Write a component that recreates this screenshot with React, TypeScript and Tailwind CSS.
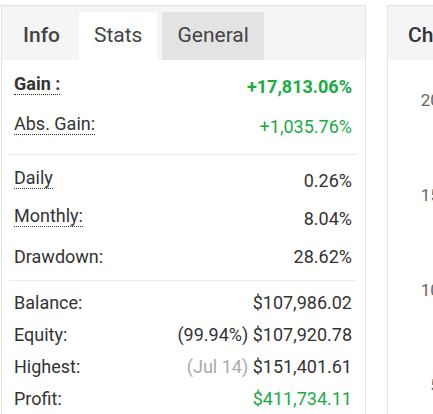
import React from "react";

const green = "text-[#19ac45]";

function Dotted({ children, bold }: { children: React.ReactNode; bold?: boolean }) {
  // underlined labels sit a little higher than their values
  return (
    <span
      className={`mb-[4px] inline-block border-b border-dotted border-[#333] leading-[20px] ${bold ? "font-bold" : ""}`}
    >
      {children}
    </span>
  );
}

function Row({
  label,
  value,
  h = "h-[40px]",
}: {
  label: React.ReactNode;
  value: React.ReactNode;
  h?: string;
}) {
  return (
    <div className={`flex items-center justify-between px-[5px] ${h}`}>
      <div className="flex">{label}</div>
      <div>{value}</div>
    </div>
  );
}

function Separator({ className }: { className: string }) {
  return <div className={`h-px bg-[#ececec] ${className}`} />;
}

export default function App() {
  return (
    <div
      className="flex h-[414px] w-[433px] gap-[21px] overflow-hidden bg-white pl-[1px] pt-[5px] text-[18px] text-[#333]"
      style={{ fontFamily: "Roboto, 'Liberation Sans', sans-serif" }}
    >
      {/* stats panel */}
      <div className="w-[365px] shrink-0 border border-b-0 border-[#e3e3e3]">
        <div className="flex h-[54px] items-end gap-[4px] bg-[#f5f5f5] pl-[6px]">
          <div className="flex h-[48px] items-center px-[15px] text-[21px] font-medium text-[#444]">
            Info
          </div>
          <div className="flex h-[48px] items-center bg-white px-[15px] text-[21px] text-[#444]">
            Stats
          </div>
          <div className="ml-[1px] flex h-[48px] items-center bg-[#e3e3e3] px-[15px] text-[21px] text-[#444]">
            General
          </div>
        </div>

        <div className="pl-[7px] pr-[8px] pt-[6px]">
          <Row
            label={<Dotted bold>Gain :</Dotted>}
            value={<span className={`font-bold ${green}`}>+17,813.06%</span>}
          />
          <Row
            label={<Dotted>Abs. Gain:</Dotted>}
            value={<span className={green}>+1,035.76%</span>}
          />

          <Separator className="mt-[8px]" />

          <div className="mt-[6px]">
            <Row h="h-[38px]" label={<Dotted>Daily</Dotted>} value="0.26%" />
            <Row h="h-[38px]" label={<Dotted>Monthly:</Dotted>} value="8.04%" />
            <Row h="h-[38px]" label="Drawdown:" value="28.62%" />
          </div>

          <Separator className="mt-[5px]" />

          <div className="mt-[5px]">
            <Row h="h-[32px]" label="Balance:" value="$107,986.02" />
            <Row h="h-[32px]" label="Equity:" value="(99.94%) $107,920.78" />
            <Row
              h="h-[32px]"
              label="Highest:"
              value={
                <>
                  <span className="text-[#aaa]">(Jul 14)</span> $151,401.61
                </>
              }
            />
            <Row
              h="h-[32px]"
              label="Profit:"
              value={<span className={green}>$411,734.11</span>}
            />
          </div>
        </div>
      </div>

      {/* chart panel, cut off by the window */}
      <div className="w-[300px] shrink-0 border border-b-0 border-[#e3e3e3]">
        <div className="flex h-[54px] items-end bg-[#f5f5f5] pl-[20px]">
          <div className="flex h-[48px] items-center text-[21px] font-medium text-[#333]">
            Chart
          </div>
        </div>
        <div className="flex w-[93px] flex-col gap-[75px] pt-[30px] text-right text-[17px] leading-[20px] text-[#666]">
          <span>20000%</span>
          <span>15000%</span>
          <span>10000%</span>
          <span>5000%</span>
        </div>
      </div>
    </div>
  );
}
